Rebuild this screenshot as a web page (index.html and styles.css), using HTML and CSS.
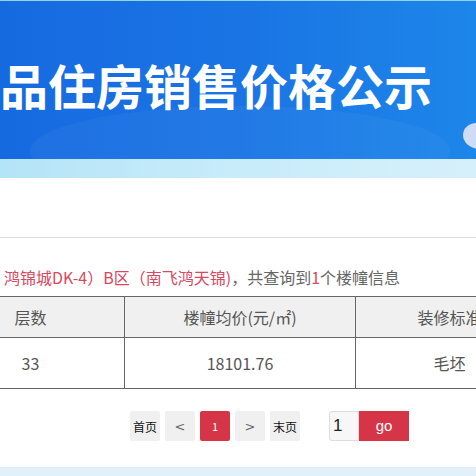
FILE: index.html
```html
<!DOCTYPE html>
<html lang="zh-CN">
<head>
<meta charset="utf-8">
<link rel="stylesheet" href="styles.css">
</head>
<body>
<div class="top-line"></div>
<header class="banner">
  <h1 class="title">品住房销售价格公示</h1>
  <span class="blob"></span>
</header>
<div class="band"></div>
<div class="spacer"></div>
<p class="summary"><span class="red">鸿锦城DK-4）B区（南飞鸿天锦)</span>，共查询到<span class="red">1</span>个楼幢信息</p>
<table class="grid">
  <colgroup><col class="c1"><col class="c2"><col class="c3"></colgroup>
  <thead>
    <tr><th>层数</th><th>楼幢均价(元/㎡)</th><th>装修标准</th></tr>
  </thead>
  <tbody>
    <tr><td>33</td><td>18101.76</td><td>毛坯</td></tr>
  </tbody>
</table>
<nav class="pager">
  <span class="pg">首页</span>
  <span class="pg arrow">&lt;</span>
  <span class="pg active">1</span>
  <span class="pg arrow">&gt;</span>
  <span class="pg">末页</span>
  <div class="jump">
    <span class="inp">1</span>
    <span class="go">go</span>
  </div>
</nav>
<div class="bottom-band"></div>
</body>
</html>
```
FILE: styles.css
```css
html, body {
  margin: 0;
  padding: 0;
  width: 476px;
  height: 476px;
  overflow: hidden;
  background: #fff;
  font-family: "Noto Sans CJK SC", "Microsoft YaHei", sans-serif;
}
.top-line {
  height: 1px;
  background: #8fd6f2;
}
.banner {
  position: relative;
  height: 158px;
  background: linear-gradient(90deg, #166ae0 0%, #1a74e4 50%, #1d86ea 100%);
  display: flex;
  align-items: center;
  overflow: hidden;
}
.banner::before {
  content: "";
  position: absolute;
  left: 30px;
  top: 105px;
  width: 420px;
  height: 90px;
  border-radius: 50%;
  background: rgba(255,255,255,0.04);
}
.title {
  margin: 0;
  padding-top: 8px;
  font-size: 48px;
  font-weight: 700;
  color: #fff;
  line-height: 1;
  white-space: nowrap;
  letter-spacing: 0;
  position: relative;
}
.blob {
  position: absolute;
  left: 463px;
  top: 122px;
  width: 30px;
  height: 26px;
  border-radius: 50% 0 0 60%;
  background: #cfdcf6;
}
.band {
  height: 19px;
  background: linear-gradient(90deg, #b4e4f7 0%, #c8ecfa 50%, #d6f0fb 100%);
}
.spacer {
  height: 59px;
  border-bottom: 1px solid #dcdcdc;
}
.summary {
  margin: 0 0 8px 0;
  padding: 28px 0 0 4px;
  line-height: 22px;
  font-size: 16px;
  color: #666;
  white-space: nowrap;
}
.red { color: #d8485f; }
.grid {
  margin-left: -64px;
  border-collapse: collapse;
  table-layout: fixed;
  width: 607px;
  font-size: 16px;
  color: #555;
}
.c1 { width: 188px; }
.c2 { width: 231px; }
.c3 { width: 188px; }
.grid th, .grid td {
  border: 1px solid #666;
  text-align: center;
  font-weight: 400;
  padding: 0;
  white-space: nowrap;
}
.grid th {
  height: 40px;
  background: #f0f0f0;
}
.grid td {
  height: 50px;
}
.pager {
  display: flex;
  align-items: center;
  margin-top: 22px;
  padding-left: 130px;
  gap: 5px;
  height: 30px;
}
.pg {
  width: 30px;
  height: 30px;
  background: #f0f0f0;
  display: flex;
  align-items: center;
  justify-content: center;
  font-size: 12px;
  color: #111;
  border-radius: 2px;
}
.pg.arrow { color: #666; font-size: 13px; font-family: "DejaVu Sans", sans-serif; }
.pg.active {
  background: #d63447;
  color: #fff;
  font-size: 11px;
}
.jump {
  display: flex;
  align-items: center;
  margin-left: 24px;
  margin-top: -1px;
}
.inp {
  box-sizing: border-box;
  width: 30px;
  height: 30px;
  border: 1px solid #ddd;
  border-radius: 3px 0 0 3px;
  background: #f7f7f7;
  font-family: "Liberation Sans", sans-serif;
  font-size: 17px;
  color: #222;
  padding-left: 3px;
  line-height: 28px;
}
.go {
  width: 50px;
  height: 30px;
  background: #d63447;
  color: #fff;
  font-family: "Liberation Sans", sans-serif;
  font-size: 15px;
  display: flex;
  align-items: center;
  justify-content: center;
}
.bottom-band {
  margin-top: 26px;
  height: 12px;
  background: #e2f1f9;
}
```
